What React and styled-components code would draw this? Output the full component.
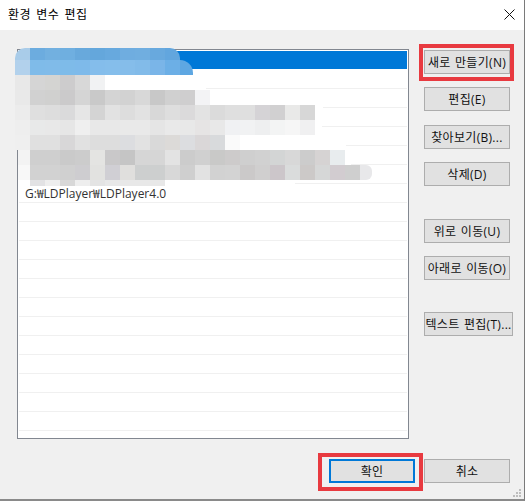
import styled, { createGlobalStyle } from "styled-components";

const GlobalStyle = createGlobalStyle`
	html, body {
		margin: 0;
		padding: 0;
		background: #f0f0f0;
	}
	* {
		box-sizing: border-box;
	}
`;

const Window = styled.div`
	position: relative;
	width: 525px;
	height: 501px;
	background: #f0f0f0;
	border-right: 1px solid #7a7a7a;
	border-bottom: 2px solid #8a8a8a;
	font-family: "Open Sans", "Noto Sans CJK KR", sans-serif;
	font-size: 12px;
	color: #111;
	overflow: hidden;
`;

const TitleBar = styled.div`
	display: flex;
	align-items: center;
	justify-content: space-between;
	height: 30px;
	padding: 0 9px 2px 8px;
	background: #fff;
	font-size: 12px;
	letter-spacing: 0.5px;
	word-spacing: 1.5px;
	color: #000;
`;

const Main = styled.div`
	display: flex;
	height: 409px;
	padding: 19px 0 0 17px;
`;

const ListWrap = styled.div`
	position: relative;
	width: 392px;
	height: 390px;
`;

const List = styled.div`
	height: 100%;
	padding: 1px;
	background: #fff;
	border: 1px solid #828790;
	overflow: hidden;
`;

const Row = styled.div`
	display: flex;
	align-items: center;
	height: 19px;
	padding: 0 0 1px 6px;
	border-bottom: 1px solid ${(p) => (p.$selected ? "#fff" : "#f0f0f0")};
	background: ${(p) => (p.$selected ? "#0078d7" : "#fff")};
	background-clip: padding-box;
	color: #333;
	white-space: nowrap;
`;

const Mosaic = styled.div`
	position: absolute;
	left: -2px;
	top: -1px;
`;

const Band = styled.div`
	display: flex;
	height: ${(p) => p.$h}px;
`;

const Cell = styled.div`
	width: ${(p) => p.$w || 15}px;
	background: ${(p) => p.$c};
	border-radius: ${(p) => p.$r || "0"};
`;

const Side = styled.div`
	display: flex;
	flex-direction: column;
	align-items: flex-start;
	margin-left: 15px;
	padding-top: 1px;
`;

const Button = styled.div`
	position: relative;
	display: flex;
	align-items: center;
	justify-content: center;
	flex: none;
	width: ${(p) => p.$w || 86}px;
	height: 24px;
	margin-top: ${(p) => p.$top || 0}px;
	background: #e1e1e1;
	border: ${(p) => (p.$primary ? "2px solid #0078d7" : "1px solid #adadad")};
	color: #111;
	letter-spacing: 0.3px;
	word-spacing: 1px;
	white-space: nowrap;
`;

const Marker = styled.span`
	position: absolute;
	top: ${(p) => p.$t}px;
	right: ${(p) => p.$rt}px;
	bottom: ${(p) => p.$b}px;
	left: ${(p) => p.$l}px;
	border: 4px solid #e83a40;
`;

const Footer = styled.div`
	display: flex;
	justify-content: flex-end;
	gap: 9px;
	margin-top: 20px;
	padding-right: 14px;
`;

const Grip = styled.svg`
	position: absolute;
	right: 2px;
	bottom: 1px;
	width: 9px;
	height: 9px;
	fill: #bdbdbd;
`;

const rows = Array.from({ length: 21 }, (_, i) => (i === 7 ? "G:₩LDPlayer₩LDPlayer4.0" : ""));

const tl = "10px 0 0 0";
const gapLeft = (c) => `linear-gradient(90deg, transparent 3px, ${c} 3px)`;
const bands = [
	{ h: 12, cells: ["#a9cce9", "#6cacdf", "#72b0e0", "#6fafe0", "#68a9dc", "#64a7dc", "#67a9de", "#6fade0", "#70aee0", "#68a9de"], radius: tl, end: { w: 15, c: "#62a6de", r: "0 10px 0 0" } },
	{ h: 15, cells: ["#b2d1ec", "#7fbbe9", "#80bbe9", "#7ebbe9", "#7ebaea", "#84bdeb", "#85beeb", "#85bdea", "#82bbe9", "#7ab5e8", "#6cafe6"], end: { w: 13, c: "#5ea7e2", r: "0 13px 0 0" } },
	{ h: 15, cells: ["#e8e8e8", "#d5d5d5", "#d4d4d2", "#cdcccd", "#d8d8d8", "#f1f2f3"], end: { w: 101, c: "#fff" } },
	{ h: 15, cells: ["#e9e9e9", "#d1d1d1", "#d0d0cf", "#cbcacb", "#d5d5d5", "#c9c9c9", "#d4d4d4", "#d2d2d2", "#d8d8d8", "#c8c8c8", "#d0d0d0", "#cfcecf", "#f3f3f5"] },
	{ h: 15, cells: ["#ececec", "#dfdfdf", "#dddddd", "#dadadb", "#e6e6e6", "#d4d4d4", "#e2e2e2", "#dddddd", "#e2e2e2", "#d8d8d8", "#dedede", "#dbdadb", "#e3e3e3", "#dbdbdb", "#dfdfdf", "#dfdfdf", "#d5d3d6", "#d1d0d1", "#e9e9e8", "#d7d7d7"], end: { w: 8, c: "#fff" } },
	{ h: 15, cells: ["#eeeeee", "#e8e9e9", "#e8e8e8", "#e6e6e6", "#efefef", "#e8e8e8", "#e8e8e8", "#e9e9e9", "#e9e9e9", "#e5e5e5", "#e9e9e9", "#e8e8e8", "#e6e4e4", "#e8e8e8", "#f0f1f3", "#f1f2f3", "#eeeff0", "#f3f4f4", "#f6f6f6", "#f0f0f1"], end: { w: 7, c: "#fff" } },
	{ h: 15, cells: ["#efefef", "#e0e0e0", "#e0e0e0", "#d8d7d8", "#e1e1e1", "#dddddd", "#dddddd", "#dcdde0", "#e2e2e2", "#d9d9d9", "#dcdad8", "#dcdde0", "#dad7d8", "#d8dadc", "#fafafa"], end: { w: 106, c: "#fff" } },
	{ h: 15, cells: [gapLeft("#f3f3f3"), "#cfcfcf", "#cfcfcf", "#cacaca", "#cccccc", "#e4e4e2", "#c9c8c9", "#c5c5c5", "#d6d6d6", "#d6d6d6", "#e3e3e3", "#cccccc", "#d0d0d0", "#c9c9c8", "#cdcbcb", "#cfcfcf", "#d1d1d1", "#d3d5d5", "#d8d8d8", "#cccccc", "#d6d3d3", "#e8ecee"], end: { w: 6, c: "#fff" } },
	{ h: 15, cells: [gapLeft("#f8f8f8"), "#d2d2d2", "#d2d2d2", "#d0d0d0", "#cecdd0", "#e2e2e0", "#d0cfd4", "#e0dfdd", "#cdcfcf", "#cdcfcf", "#d8d8d8", "#cfcfcf", "#e2e2e2", "#d2d2d2", "#d3d3d3", "#cbc9c9", "#d0cfcf", "#ccc6ca", "#dadcdc", "#ccc9c8", "#d6d7d7", "#d2ccd0", "#cfcfcf"], end: { w: 12, c: "#e8e8ea", r: "0 6px 6px 0" } },
	{ h: 6, cells: [gapLeft("#fff"), "#e2e2e4", "#eeeeee", "#d8d8d8", "#eeeeee", "#e4e4e4", "#e8e8e8", "#e8e8e8", "#e8e8e8", "#e8e8e8"], end: { w: 130, c: "#fff" } },
];

function App() {
	return (
		<>
			<GlobalStyle />
			<Window>
				<TitleBar>
					<span>환경 변수 편집</span>
					<svg width="11" height="11" viewBox="0 0 11 11" stroke="#111" strokeWidth="1" fill="none">
						<path d="M.5.5l10 10M10.5.5l-10 10" />
					</svg>
				</TitleBar>
				<Main>
					<ListWrap>
						<List>
							{rows.map((text, i) => (
								<Row key={i} $selected={i === 0}>
									{text}
								</Row>
							))}
						</List>
						<Mosaic>
							{bands.map((band, i) => (
								<Band key={i} $h={band.h}>
									{band.cells.map((c, j) => (
										<Cell key={j} $c={c} $r={j === 0 ? band.radius : undefined} />
									))}
									{band.end && <Cell $w={band.end.w} $c={band.end.c} $r={band.end.r} />}
								</Band>
							))}
						</Mosaic>
					</ListWrap>
					<Side>
						<Button>
							새로 만들기(N)
							<Marker $t={-7} $rt={-5} $b={-8} $l={-6} />
						</Button>
						<Button $top={13}>편집(E)</Button>
						<Button $top={14}>찾아보기(B)...</Button>
						<Button $top={13}>삭제(D)</Button>
						<Button $top={33}>위로 이동(U)</Button>
						<Button $top={13}>아래로 이동(O)</Button>
						<Button $top={32} $w={89}>
							텍스트 편집(T)...
						</Button>
					</Side>
				</Main>
				<Footer>
					<Button $primary>
						확인
						<Marker $t={-8} $rt={-10} $b={-10} $l={-13} />
					</Button>
					<Button>취소</Button>
				</Footer>
				<Grip viewBox="0 0 9 9">
					<rect x="6" y="0" width="2" height="2" />
					<rect x="3" y="3" width="2" height="2" />
					<rect x="6" y="3" width="2" height="2" />
					<rect x="0" y="6" width="2" height="2" />
					<rect x="3" y="6" width="2" height="2" />
					<rect x="6" y="6" width="2" height="2" />
				</Grip>
			</Window>
		</>
	);
}

export default App;
